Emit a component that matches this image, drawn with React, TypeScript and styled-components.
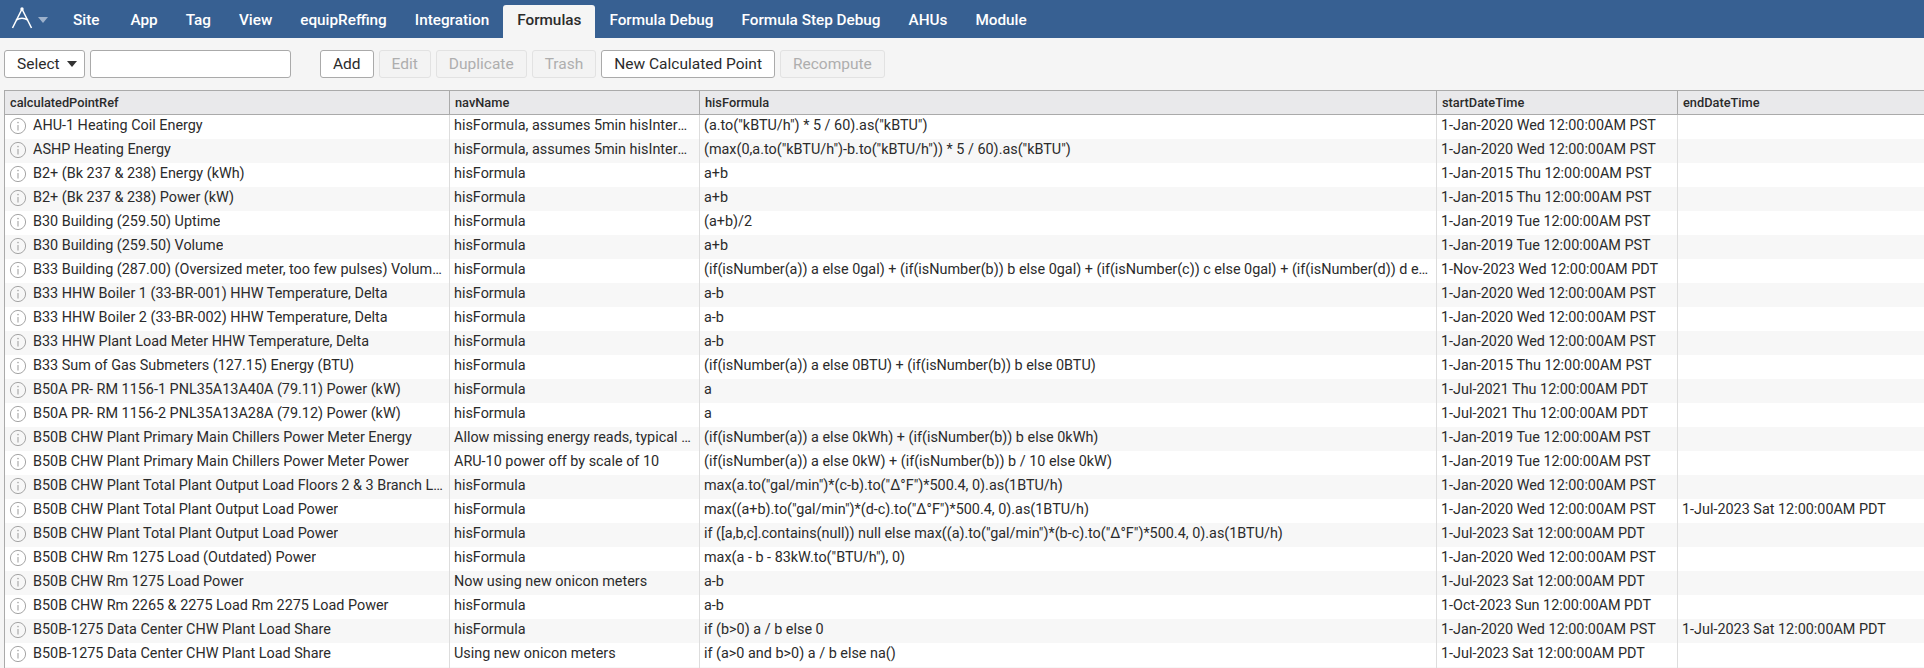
import React from "react";
import styled, { createGlobalStyle } from "styled-components";

const GlobalStyle = createGlobalStyle`
  html, body {
    margin: 0;
    height: 100%;
    overflow: hidden;
    background: #f5f5f5;
    font-family: Roboto, "Liberation Sans", sans-serif;
    color: #2b2b2b;
  }
`;

const Page = styled.div`
  height: 668px;
  overflow: hidden;
`;

const NavBar = styled.nav`
  display: flex;
  align-items: flex-end;
  height: 38px;
  padding-left: 8px;
  background: #376092;
`;

const Logo = styled.div`
  display: flex;
  align-items: center;
  gap: 4px;
  width: 51px;
  height: 38px;
`;

const Caret = styled.span`
  width: 0;
  height: 0;
  margin-top: 2px;
  border-left: 5px solid transparent;
  border-right: 5px solid transparent;
  border-top: 6px solid #9db1cb;
`;

const NavTab = styled.a<{ $active?: boolean }>`
  display: flex;
  align-items: center;
  box-sizing: border-box;
  height: 33px;
  padding: 0 14px 4px;
  border-radius: 3px 3px 0 0;
  font-size: 15.3px;
  font-weight: 500;
  color: ${({ $active }) => ($active ? "#2b2b2b" : "#fff")};
  background: ${({ $active }) => ($active ? "#f5f5f5" : "transparent")};

  &:first-of-type {
    margin-right: 3px;
  }
`;

const Toolbar = styled.div`
  display: flex;
  align-items: center;
  height: 52px;
  padding-left: 4px;
`;

const Button = styled.button`
  height: 28px;
  margin: 0;
  padding: 0 12px;
  border: 1px solid ${({ disabled }) => (disabled ? "#e2e2e2" : "#aaa")};
  border-radius: 3px;
  background: ${({ disabled }) => (disabled ? "#f3f3f3" : "#fff")};
  color: ${({ disabled }) => (disabled ? "#aeaeae" : "#2b2b2b")};
  font-family: inherit;
  font-size: 15.5px;
`;

const SelectButton = styled(Button)`
  display: flex;
  align-items: center;
  gap: 7px;
  width: 81px;
  margin-right: 5px;
  white-space: nowrap;
`;

const SelectCaret = styled.span`
  flex: none;
  width: 0;
  height: 0;
  border-left: 5px solid transparent;
  border-right: 5px solid transparent;
  border-top: 6px solid #333;
`;

const SearchInput = styled.input`
  box-sizing: border-box;
  width: 201px;
  height: 28px;
  margin-right: 29px;
  border: 1px solid #aaa;
  border-radius: 3px;
  background: #fff;
`;

const ActionGroup = styled.div`
  display: flex;
  gap: 5px;
`;

const Table = styled.table`
  box-sizing: border-box;
  width: 1920px;
  margin-left: 4px;
  border-collapse: collapse;
  table-layout: fixed;
  background: #fff;
`;

const HeadCell = styled.th<{ $width?: number }>`
  box-sizing: border-box;
  width: ${({ $width }) => ($width ? `${$width}px` : "auto")};
  height: 24px;
  padding: 0 5px;
  border: 1px solid #aaa;
  background: #e9e9eb;
  font-size: 12.8px;
  font-weight: 500;
  text-align: left;
  color: #2b2b2b;
`;

const Row = styled.tr<{ $odd: boolean }>`
  height: 24px;
  background: ${({ $odd }) => ($odd ? "#f7f7f7" : "#fff")};
`;

const Cell = styled.td`
  box-sizing: border-box;
  height: 24px;
  padding: 0 7px 2px 4px;
  border-left: 1px solid #ddd;
  border-right: 1px solid #ddd;
  font-size: 14.4px;
  white-space: nowrap;
  overflow: hidden;
  text-overflow: ellipsis;
`;

const FirstCell = styled(Cell)`
  padding-right: 4px;
  border-left: 1px solid #aaa;
`;

const PointName = styled.div`
  display: flex;
  align-items: center;
  gap: 6px;
`;

const PointText = styled.span`
  min-width: 0;
  overflow: hidden;
  text-overflow: ellipsis;
`;

const InfoIcon = () => (
  <svg width="18" height="18" viewBox="0 0 18 18" style={{ flex: "none" }}>
    <circle cx="9" cy="9" r="7.6" fill="none" stroke="#a5a5a5" strokeWidth="1" />
    <circle cx="9" cy="5.6" r="0.8" fill="#a5a5a5" />
    <path d="M9 8v5.4" stroke="#a5a5a5" strokeWidth="1.1" />
  </svg>
);

const LogoMark = () => (
  <svg width="26" height="26" viewBox="0 0 26 26">
    <g fill="none" stroke="#fff" strokeWidth="1.5">
      <path d="M14 3 4.5 22" />
      <path d="M14 3l9.5 19" />
      <path d="M8 14c4-2.2 8-2.2 12 0" />
    </g>
    <circle cx="14" cy="3" r="1.7" fill="#fff" />
  </svg>
);

const tabs = [
  "Site",
  "App",
  "Tag",
  "View",
  "equipReffing",
  "Integration",
  "Formulas",
  "Formula Debug",
  "Formula Step Debug",
  "AHUs",
  "Module",
];

const columns = [
  { name: "calculatedPointRef", width: 445 },
  { name: "navName", width: 250 },
  { name: "hisFormula", width: 737 },
  { name: "startDateTime", width: 241 },
  { name: "endDateTime", width: 247 },
];

const PST20 = "1-Jan-2020 Wed 12:00:00AM PST";
const PST15 = "1-Jan-2015 Thu 12:00:00AM PST";
const PST19 = "1-Jan-2019 Tue 12:00:00AM PST";
const PDT21 = "1-Jul-2021 Thu 12:00:00AM PDT";
const PDT23 = "1-Jul-2023 Sat 12:00:00AM PDT";

const rows: [string, string, string, string, string?][] = [
  ["AHU-1 Heating Coil Energy", "hisFormula, assumes 5min hisInterpolate", '(a.to("kBTU/h") * 5 / 60).as("kBTU")', PST20],
  ["ASHP Heating Energy", "hisFormula, assumes 5min hisInterpolate", '(max(0,a.to("kBTU/h")-b.to("kBTU/h")) * 5 / 60).as("kBTU")', PST20],
  ["B2+ (Bk 237 & 238) Energy (kWh)", "hisFormula", "a+b", PST15],
  ["B2+ (Bk 237 & 238) Power (kW)", "hisFormula", "a+b", PST15],
  ["B30 Building (259.50) Uptime", "hisFormula", "(a+b)/2", PST19],
  ["B30 Building (259.50) Volume", "hisFormula", "a+b", PST19],
  ["B33 Building (287.00) (Oversized meter, too few pulses) Volume Total", "hisFormula", "(if(isNumber(a)) a else 0gal) + (if(isNumber(b)) b else 0gal) + (if(isNumber(c)) c else 0gal) + (if(isNumber(d)) d else 0gal)", "1-Nov-2023 Wed 12:00:00AM PDT"],
  ["B33 HHW Boiler 1 (33-BR-001) HHW Temperature, Delta", "hisFormula", "a-b", PST20],
  ["B33 HHW Boiler 2 (33-BR-002) HHW Temperature, Delta", "hisFormula", "a-b", PST20],
  ["B33 HHW Plant Load Meter HHW Temperature, Delta", "hisFormula", "a-b", PST20],
  ["B33 Sum of Gas Submeters (127.15) Energy (BTU)", "hisFormula", "(if(isNumber(a)) a else 0BTU) + (if(isNumber(b)) b else 0BTU)", PST15],
  ["B50A PR- RM 1156-1 PNL35A13A40A (79.11) Power (kW)", "hisFormula", "a", PDT21],
  ["B50A PR- RM 1156-2 PNL35A13A28A (79.12) Power (kW)", "hisFormula", "a", PDT21],
  ["B50B CHW Plant Primary Main Chillers Power Meter Energy", "Allow missing energy reads, typical of meters", "(if(isNumber(a)) a else 0kWh) + (if(isNumber(b)) b else 0kWh)", PST19],
  ["B50B CHW Plant Primary Main Chillers Power Meter Power", "ARU-10 power off by scale of 10", "(if(isNumber(a)) a else 0kW) + (if(isNumber(b)) b / 10 else 0kW)", PST19],
  ["B50B CHW Plant Total Plant Output Load Floors 2 & 3 Branch Load", "hisFormula", 'max(a.to("gal/min")*(c-b).to("Δ°F")*500.4, 0).as(1BTU/h)', PST20],
  ["B50B CHW Plant Total Plant Output Load Power", "hisFormula", 'max((a+b).to("gal/min")*(d-c).to("Δ°F")*500.4, 0).as(1BTU/h)', PST20, PDT23],
  ["B50B CHW Plant Total Plant Output Load Power", "hisFormula", 'if ([a,b,c].contains(null)) null else max((a).to("gal/min")*(b-c).to("Δ°F")*500.4, 0).as(1BTU/h)', PDT23],
  ["B50B CHW Rm 1275 Load (Outdated) Power", "hisFormula", 'max(a - b - 83kW.to("BTU/h"), 0)', PST20],
  ["B50B CHW Rm 1275 Load Power", "Now using new onicon meters", "a-b", PDT23],
  ["B50B CHW Rm 2265 & 2275 Load Rm 2275 Load Power", "hisFormula", "a-b", "1-Oct-2023 Sun 12:00:00AM PDT"],
  ["B50B-1275 Data Center CHW Plant Load Share", "hisFormula", "if (b>0) a / b else 0", PST20, PDT23],
  ["B50B-1275 Data Center CHW Plant Load Share", "Using new onicon meters", "if (a>0 and b>0) a / b else na()", PDT23],
  ["", "", "", ""],
];

const App = () => {
  return (
    <Page>
      <GlobalStyle />
      <NavBar>
        <Logo>
          <LogoMark />
          <Caret />
        </Logo>
        {tabs.map((tab) => (
          <NavTab key={tab} $active={tab === "Formulas"}>
            {tab}
          </NavTab>
        ))}
      </NavBar>
      <Toolbar>
        <SelectButton>
          Select
          <SelectCaret />
        </SelectButton>
        <SearchInput />
        <ActionGroup>
          <Button>Add</Button>
          <Button disabled>Edit</Button>
          <Button disabled>Duplicate</Button>
          <Button disabled>Trash</Button>
          <Button>New Calculated Point</Button>
          <Button disabled>Recompute</Button>
        </ActionGroup>
      </Toolbar>
      <Table>
        <thead>
          <tr>
            {columns.map((col) => (
              <HeadCell key={col.name} $width={col.width}>
                {col.name}
              </HeadCell>
            ))}
          </tr>
        </thead>
        <tbody>
          {rows.map((row, i) => (
            <Row key={i} $odd={i % 2 === 1}>
              <FirstCell>
                <PointName>
                  {row[0] && <InfoIcon />}
                  <PointText>{row[0]}</PointText>
                </PointName>
              </FirstCell>
              <Cell>{row[1]}</Cell>
              <Cell>{row[2]}</Cell>
              <Cell>{row[3]}</Cell>
              <Cell>{row[4]}</Cell>
            </Row>
          ))}
        </tbody>
      </Table>
    </Page>
  );
};

export default App;
